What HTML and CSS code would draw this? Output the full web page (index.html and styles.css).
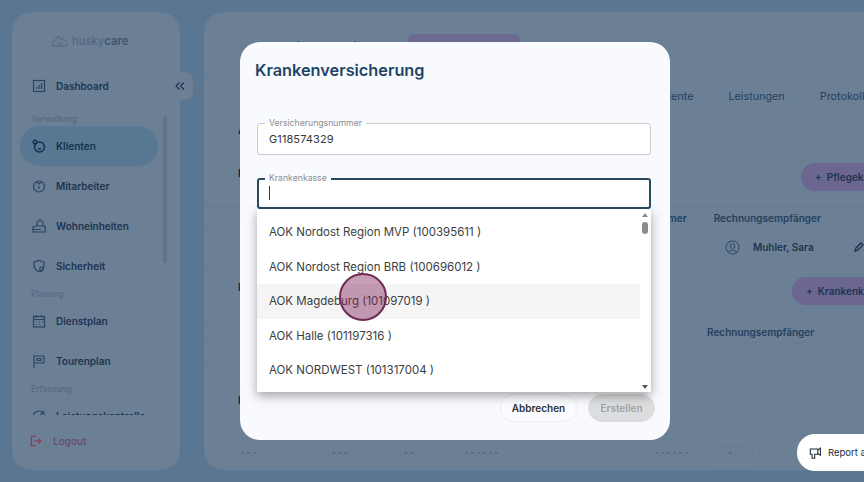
FILE: index.html
```html
<!DOCTYPE html>
<html lang="de">
<head>
<meta charset="utf-8">
<title>Krankenversicherung</title>
<link rel="stylesheet" href="styles.css">
</head>
<body>
<div class="app">
  <aside class="sidebar">
    <div class="logo">
      <svg class="logo-icon" viewBox="0 0 20 16" fill="none" stroke="#566c83" stroke-width="1.300"><path d="M4 14a3 3 0 0 1-1-6l4-6 3 4 3-1 3 3a3.500 3.500 0 0 1 0 6z"/><path d="M7 14c0-3 2-4 4-3l2 3"/></svg>
      <span class="logo-text">husky<b>care</b></span>
    </div>
    <div class="nav-item top"><svg class="ic" viewBox="0 0 14 14" fill="none" stroke="#2c4460" stroke-width="1.200"><rect x="1.500" y="1.500" width="11" height="11"/><path d="M4.500 10V8M7 10V6M9.500 10V4"/></svg><span>Dashboard</span></div>
    <div class="collapse">
      <svg viewBox="0 0 10 10" fill="none" stroke="#1d3550" stroke-width="1.200"><path d="M4.500 1.500 1 5l3.500 3.500M9 1.500 5.500 5 9 8.500"/></svg>
    </div>
    <div class="scroll-track"></div>
    <div class="nav-scroll">
      <div class="group">Verwaltung</div>
      <div class="nav-item active"><svg class="ic" viewBox="0 0 14 14" fill="none" stroke="#0f3350" stroke-width="1.500"><circle cx="7.500" cy="8" r="5"/><circle cx="3" cy="3" r="1.800"/><path d="M5.500 7.500h.1M9.500 7.500h.1M6 10h3"/></svg><span>Klienten</span></div>
      <div class="nav-item"><svg class="ic" viewBox="0 0 14 14" fill="none" stroke="#2c4460" stroke-width="1.200"><circle cx="7" cy="7.500" r="5.500"/><path d="M4.500 3 7 5l2.500-2M7 7v3"/></svg><span>Mitarbeiter</span></div>
      <div class="nav-item"><svg class="ic" viewBox="0 0 14 14" fill="none" stroke="#2c4460" stroke-width="1.200"><path d="M1 13V8l3-1h9v6zM5 7V3l3-2 3 2v4M1 10.500h8"/></svg><span>Wohneinheiten</span></div>
      <div class="nav-item"><svg class="ic" viewBox="0 0 14 14" fill="none" stroke="#2c4460" stroke-width="1.200"><path d="M7 1.500 12 3c.500 5-1 8-3 9.500C5 13 2 10 2 5.500V3z"/><circle cx="9.500" cy="10" r="1.800"/></svg><span>Sicherheit</span></div>
      <div class="group">Planung</div>
      <div class="nav-item"><svg class="ic" viewBox="0 0 14 14" fill="none" stroke="#2c4460" stroke-width="1.200"><rect x="1.500" y="2.500" width="11" height="10.500"/><path d="M1.500 5.500h11M4 1v2.500M10 1v2.500M4 8h1M7 8h1M10 8h1M4 10.500h1M7 10.500h1"/></svg><span>Dienstplan</span></div>
      <div class="nav-item"><svg class="ic" viewBox="0 0 14 14" fill="none" stroke="#2c4460" stroke-width="1.200"><path d="M2 14V2h10v7H2"/><path d="M5 4.500h4v2H5z"/></svg><span>Tourenplan</span></div>
      <div class="group">Erfassung</div>
      <div class="nav-item"><svg class="ic" viewBox="0 0 14 14" fill="none" stroke="#2c4460" stroke-width="1.200"><circle cx="7" cy="8" r="6"/><path d="m7 8 5-6"/></svg><span>Leistungskontrolle</span></div>
    </div>
    <div class="logout"><svg class="ic-logout" viewBox="0 0 14 14" fill="none" stroke="#94304f" stroke-width="1.300"><path d="M7 1.500H1.500v11H7"/><path d="M5 7h7.500M10 4.500 12.500 7 10 9.500"/></svg><span>Logout</span></div>
  </aside>

  <main class="content">
    <div class="head-row"><span class="back">←</span><span class="head-title">Klientenansicht</span><span class="head-badge"></span></div>
    <div class="tabs"><span>Dokumente</span><span>Leistungen</span><span>Protokolle</span></div>
    <div class="sec-title lone">A</div>
    <div class="sec-row first"><span class="sec-title">P</span><button class="pill">+&nbsp; Pflegekasse</button></div>
    <div class="table-head one"><span>Versicherungsnummer</span><span>Rechnungsempfänger</span></div>
    <div class="table-row"><svg class="avatar" viewBox="0 0 16 16" fill="none" stroke="#2c4460" stroke-width="1"><circle cx="8" cy="8" r="7"/><circle cx="8" cy="6.500" r="2.500"/><path d="M3.500 13c1-2.500 8-2.500 9 0"/></svg><span class="person">Muhler, Sara</span><svg class="edit" viewBox="0 0 10 10" fill="none" stroke="#1d3550" stroke-width="1.400"><path d="M1 9l1-3 5-5 2 2-5 5z"/></svg></div>
    <div class="sec-row second"><span class="sec-title">K</span><button class="pill">+&nbsp; Krankenkasse</button></div>
    <div class="table-head two"><span>Rechnungsempfänger</span></div>
    <div class="empty-row"></div>
    <div class="sec-title low">B</div>
    <div class="bottom-row">
      <i class="frag f1"></i><i class="frag f2"></i><i class="frag f3"></i><i class="frag f4"></i><i class="frag f5"></i>
      <div class="ghost-btn"><i class="frag f6"></i></div>
    </div>
  </main>
</div>

<div class="report"><svg viewBox="0 0 16 16" fill="none" stroke="#1c2a38" stroke-width="1.200"><path d="M1.500 3.500h8.500v6H6.500v4.500H3.500V9.500h-2zM10 5l3-2.500v8L10 8.500"/></svg><span>Report a problem</span></div>

<section class="modal">
  <h1 class="modal-title">Krankenversicherung</h1>
  <div class="field">
    <span class="field-label">Versicherungsnummer</span>
    <div class="field-value">G118574329</div>
  </div>
  <div class="field focus">
    <span class="field-label">Krankenkasse</span>
    <div class="field-value"><i class="caret"></i></div>
  </div>
  <div class="dropdown">
    <ul class="options">
      <li>AOK Nordost Region MVP (100395611 )</li>
      <li>AOK Nordost Region BRB (100696012 )</li>
      <li class="hover">AOK Magdeburg (101097019 )</li>
      <li>AOK Halle (101197316 )</li>
      <li>AOK NORDWEST (101317004 )</li>
    </ul>
    <div class="scrollbar">
      <i class="arrow up"></i>
      <i class="thumb"></i>
      <i class="arrow down"></i>
    </div>
  </div>
  <div class="actions">
    <button class="btn cancel">Abbrechen</button>
    <button class="btn create">Erstellen</button>
  </div>
</section>

<div class="click-dot"></div>
</body>
</html>
```
FILE: styles.css
```css
* { box-sizing: border-box; }
html, body { margin: 0; height: 100%; }
body {
  width: 864px; height: 482px; overflow: hidden; position: relative;
  background: #5a7691;
  font-family: "Inter", "Liberation Sans", sans-serif;
  color: #1d3550;
}
.app { display: flex; gap: 24px; padding: 12px 0 12px 12px; height: 482px; }
.sidebar {
  position: relative; width: 168px; flex: none; background: #6b7f95; border-radius: 20px;
  display: flex; flex-direction: column;
}
.logo { display: flex; align-items: center; gap: 3px; height: 57px; padding-left: 40px; }
.logo-icon { width: 17px; height: 14px; }
.logo-text { font-size: 11.400px; color: #4f657c; }
.logo-text b { font-weight: 600; color: #3f566e; }
.nav-item { display: flex; align-items: center; height: 40px; padding-left: 20px; gap: 10px; font-size: 10px; font-weight: 600; color: #1d3550; white-space: nowrap; }
.nav-item.top { height: 33px; }
.ic { width: 14px; height: 14px; flex: none; }
.collapse { position: absolute; left: 157px; top: 60px; width: 24px; height: 28px; background: #6b7f95; border-radius: 0 8px 8px 0; display: flex; align-items: center; justify-content: center; }
.collapse svg { width: 10px; height: 10px; margin-right: 2px; }
.scroll-track { position: absolute; left: 151px; top: 104px; width: 4px; height: 147px; background: #5f7489; border-radius: 2px; }
.nav-scroll { height: 304px; margin-top: 9px; overflow: hidden; padding-left: 8px; flex: none; }
.nav-scroll .nav-item { padding-left: 12px; width: 138px; }
.group { font-size: 8.500px; color: #53677d; height: 12px; line-height: 12px; padding-left: 11px; margin: 2px 0 1px; }
.nav-item.active { background: #587792; border-radius: 20px; color: #0f3350; }
.logout { display: flex; align-items: center; gap: 11px; height: 12px; padding-left: 18px; margin-top: 20px; font-size: 10px; font-weight: 500; color: #6a4a69; }
.ic-logout { width: 12px; height: 12px; }

.content { flex: 1; min-width: 0; background: #6b7f95; border-radius: 20px 0 0 20px; overflow: hidden; }
.head-row { display: flex; align-items: center; height: 24px; margin-top: 22px; padding-left: 46px; }
.back { font-size: 14px; width: 35px; flex: none; }
.head-title { font-size: 12px; font-weight: 600; width: 123px; flex: none; white-space: nowrap; }
.head-badge { width: 112px; height: 24px; background: #6c6a90; border-radius: 6px; flex: none; }
.tabs { display: flex; gap: 35px; margin-top: 16px; padding-left: 431px; height: 44px; align-items: center; font-size: 10.800px; color: #243f5c; border-top: 1px solid #667a90; white-space: nowrap; }
.sec-title { font-size: 11px; line-height: 14px; font-weight: 700; color: #14283f; padding-left: 34px; margin-top: 3px; }
.sec-title.lone { margin-top: 5px; }
.sec-title.low { margin-top: 28px; }
.sec-row { display: flex; justify-content: space-between; align-items: flex-start; }
.sec-row.first { margin-top: 26px; width: 717px; }
.sec-row.second { margin-top: 11px; width: 708px; }
.pill { flex: none; height: 28px; width: 120px; border: 0; border-radius: 14px; background: #6b6790; color: #1d3550; font: 600 10px "Inter", sans-serif; text-align: left; padding-left: 14px; white-space: nowrap; }
.table-head { display: flex; height: 22px; align-items: center; font-size: 10px; font-weight: 600; color: #243f5c; white-space: nowrap; border-top: 1px solid #667a90; border-bottom: 1px solid #667a90; margin-top: 16px; }
.table-head.one { padding-left: 372px; gap: 27px; }
.table-head.two { padding-left: 503px; }
.table-row { display: flex; align-items: center; height: 37px; padding-left: 521px; gap: 13px; font-size: 10px; font-weight: 600; white-space: nowrap; border-bottom: 1px solid #667a90; }
.avatar { width: 15px; height: 15px; flex: none; }
.edit { width: 10px; height: 10px; margin-left: 27px; flex: none; }
.empty-row { height: 22px; border-bottom: 1px solid #667a90; }
.bottom-row { display: flex; align-items: center; height: 25px; margin-top: 33px; padding-left: 37px; }
.frag { display: block; height: 2px; background: repeating-linear-gradient(90deg, #5d7086 0 3px, transparent 3px 6px); flex: none; }
.f1 { width: 19px; }
.f2 { width: 15px; margin-left: 72px; }
.f3 { width: 13px; margin-left: 57px; }
.f4 { width: 35px; margin-left: 48px; }
.f5 { width: 34px; margin-left: 155px; }
.ghost-btn { width: 52px; height: 25px; margin-left: 16px; border: 1px solid #71859a; border-radius: 13px; display: flex; align-items: center; justify-content: center; flex: none; }
.f6 { width: 5px; }

.report { position: absolute; left: 797px; top: 434px; width: 110px; height: 37px; border-radius: 18px; background: #fff; display: flex; align-items: center; gap: 5px; padding-left: 12px; font-size: 9.500px; color: #1c2a38; white-space: nowrap; }
.report svg { width: 14px; height: 14px; flex: none; }

.modal { position: absolute; left: 240px; top: 42px; width: 430px; height: 398px; background: #f9fafd; border-radius: 20px; padding: 0 19px 0 17px; }
.modal-title { margin: 18px 0 0 -2px; font-size: 16.300px; line-height: 20px; font-weight: 600; color: #1f4566; }
.field { position: relative; height: 32px; margin-top: 43px; border: 1px solid #c9cbce; border-radius: 3px; background: #fff; }
.field.focus { margin-top: 23px; border: 2px solid #274a62; height: 31px; }
.field-label { position: absolute; left: 7px; top: -6px; background: linear-gradient(#f9fafd 50%, #fff 50%); padding: 0 4px; font-size: 8.700px; line-height: 10px; color: #8a8d91; white-space: nowrap; }
.field.focus .field-label { left: 6px; top: -7px; }
.field-value { padding-left: 11px; line-height: 30px; font-size: 11px; letter-spacing: .1px; color: #33373b; }
.caret { display: inline-block; width: 1px; height: 14px; background: #33373b; vertical-align: middle; margin-top: -2px; }
.field.focus .field-value { line-height: 27px; padding-left: 10px; }
.dropdown { position: relative; display: flex; height: 183px; background: #fff; box-shadow: 0 4px 10px rgba(0,0,0,.35); }
.options { list-style: none; margin: 6px 0 0; padding: 0; flex: 1; }
.options li { height: 34.500px; line-height: 34px; padding-left: 12px; font-size: 11.500px; color: #3a3e42; white-space: nowrap; }
.options li.hover { background: #f5f5f5; }
.scrollbar { position: relative; width: 11px; flex: none; }
.arrow { position: absolute; left: 2px; width: 0; height: 0; border-left: 3px solid transparent; border-right: 3px solid transparent; }
.arrow.up { top: 4px; border-bottom: 4px solid #8a8a8a; }
.arrow.down { bottom: 3px; border-top: 4px solid #555; }
.thumb { position: absolute; left: 2px; top: 13px; width: 6px; height: 12px; border-radius: 3px; background: #8c8c8c; }
.actions { display: flex; justify-content: flex-end; gap: 11px; margin: 2px -4px 0 0; }
.btn { height: 28px; border-radius: 14px; font: 600 10px "Inter", sans-serif; border: 1px solid #eceef2; background: #fbfcfe; color: #2b2f33; width: 77px; padding: 0; }
.btn.create { width: 67px; border-color: #dcdddf; background: #dcdddf; color: #a0a2a5; }
.click-dot { position: absolute; left: 339px; top: 273px; width: 48px; height: 48px; border-radius: 50%; background: rgba(130,40,90,.45); border: 2px solid #6f2a55; }
```
